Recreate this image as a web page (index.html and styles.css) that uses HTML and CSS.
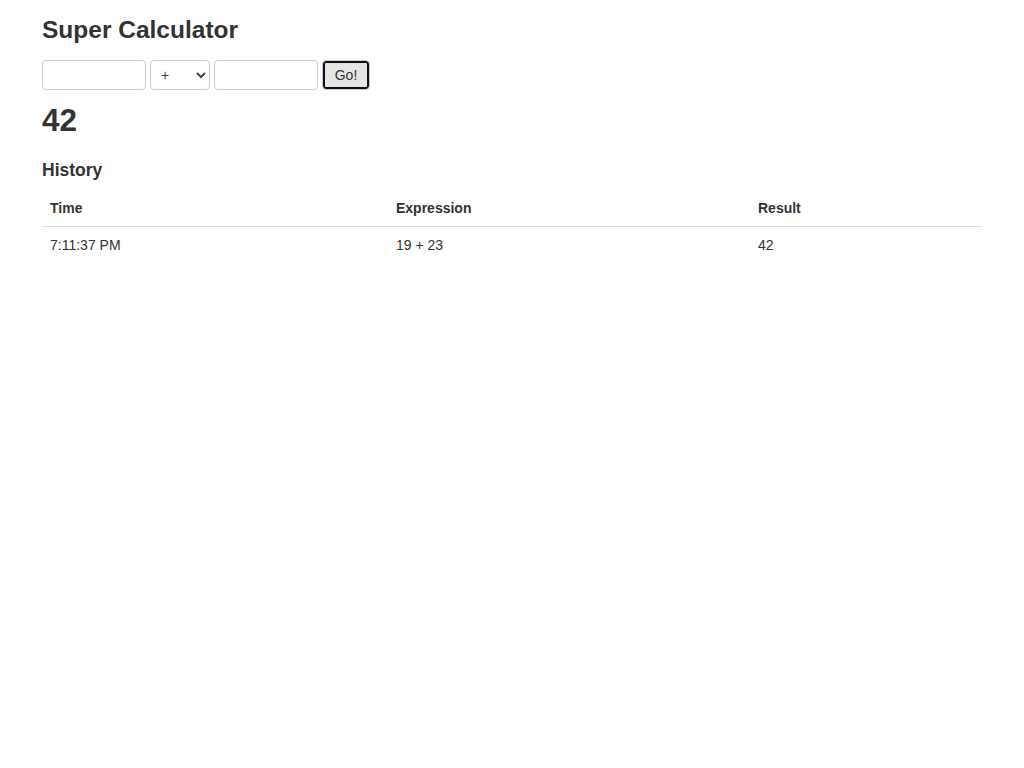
FILE: index.html
```html
<!DOCTYPE html>
<html>
<head>
<meta charset="utf-8">
<title>Super Calculator</title>
<link rel="stylesheet" href="styles.css">
</head>
<body>
<div class="container">
  <h1 class="title">Super Calculator</h1>
  <form class="calc">
    <input class="field" type="text">
    <select class="op">
      <option>+</option>
      <option>-</option>
      <option>*</option>
      <option>/</option>
    </select>
    <input class="field" type="text">
    <button class="go" type="button">Go!</button>
  </form>
  <h2 class="result">42</h2>
  <h3 class="history-title">History</h3>
  <table class="history">
    <thead>
      <tr><th class="c1">Time</th><th class="c2">Expression</th><th class="c3">Result</th></tr>
    </thead>
    <tbody>
      <tr><td>7:11:37 PM</td><td>19 + 23</td><td>42</td></tr>
    </tbody>
  </table>
</div>
</body>
</html>
```

FILE: styles.css
```css
html, body {
  margin: 0;
  padding: 0;
  background: #fff;
}
body {
  font-family: "Liberation Sans", Arial, Helvetica, sans-serif;
  font-size: 14px;
  line-height: 20px;
  color: #333;
}
.container {
  width: 940px;
  margin: 0 auto;
  padding-top: 10px;
}
.title {
  font-size: 24.5px;
  line-height: 40px;
  margin: 0 0 10px;
  font-weight: bold;
}
.calc {
  display: flex;
  gap: 4px;
  align-items: stretch;
  height: 30px;
  margin: 0;
}
.field {
  box-sizing: border-box;
  width: 104px;
  height: 30px;
  border: 1px solid #ccc;
  border-radius: 4px;
  padding: 4px 6px;
  font: inherit;
  background: #fff;
}
.op {
  box-sizing: border-box;
  width: 60px;
  height: 30px;
  border: 1px solid #ccc;
  border-radius: 4px;
  padding: 0 0 0 6px;
  font: inherit;
  color: #444;
  background: #fff;
}
.go {
  box-sizing: border-box;
  width: 48px;
  height: 30px;
  border: 1px solid #ccc;
  border-radius: 4px;
  box-shadow: inset 0 0 0 2px #111;
  background: #e6e6e6;
  font: inherit;
  color: #333;
  padding: 0;
}
.result {
  font-size: 31.5px;
  line-height: 40px;
  font-weight: bold;
  margin: 10px 0 10px;
}
.history-title {
  font-size: 17.5px;
  line-height: 20px;
  font-weight: bold;
  margin: 20px 0 10px;
}
.history {
  width: 100%;
  border-collapse: collapse;
  border-spacing: 0;
}
.history th, .history td {
  text-align: left;
  padding: 8px;
  line-height: 20px;
  vertical-align: top;
}
.history th {
  font-weight: bold;
  border-bottom: 1px solid #ddd;
}
.c1 { width: 330px; }
.c2 { width: 346px; }
```
